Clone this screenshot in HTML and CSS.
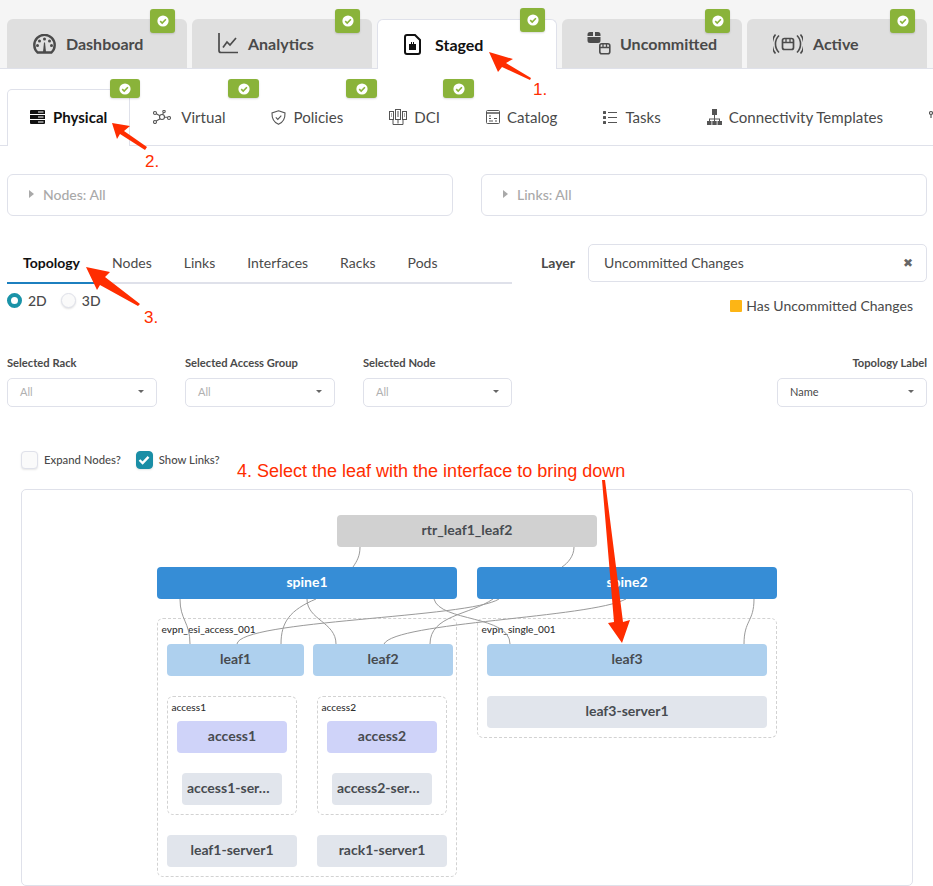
FILE: index.html
```html
<!DOCTYPE html>
<html lang="en">
<head>
<meta charset="utf-8">
<title>Staged - Physical Topology</title>
<link rel="stylesheet" href="styles.css">
</head>
<body>
<div class="page">
  <svg width="0" height="0" class="defs">
    <symbol id="ok" viewBox="0 0 12 12">
      <circle cx="6" cy="6" r="5.6" fill="#fff"/>
      <path d="M3.2 6.2 5.2 8.1 8.9 4.2" fill="none" stroke="#8ab33a" stroke-width="1.6"/>
    </symbol>
  </svg>

  <nav class="main-tabs">
    <div class="main-tab">
      <svg class="ic" width="23" height="20" viewBox="0 0 23 20"><path d="M4.5 18.500A10.200 10.200 0 1 1 18.500 18.500Z" fill="none" stroke="#4b4b4b" stroke-width="2.400"/><path d="M10 18 11 8.500h1L13 18Z" fill="#4b4b4b"/><circle cx="11.500" cy="5" r="1.500" fill="#4b4b4b"/><circle cx="6.500" cy="7" r="1.500" fill="#4b4b4b"/><circle cx="16.500" cy="7" r="1.500" fill="#4b4b4b"/><circle cx="4.500" cy="11.500" r="1.500" fill="#4b4b4b"/><circle cx="18.500" cy="11.500" r="1.500" fill="#4b4b4b"/></svg>
      <span>Dashboard</span>
      <span class="badge"><svg width="12" height="12"><use href="#ok"/></svg></span>
    </div>
    <div class="main-tab">
      <svg class="ic" width="20" height="21" viewBox="0 0 20 21"><path d="M1 0v17.500a2 2 0 0 0 2 2h17" fill="none" stroke="#4b4b4b" stroke-width="1.700"/><path d="M5 14.500 9 9l3 3 6-7" fill="none" stroke="#4b4b4b" stroke-width="1.700"/></svg>
      <span>Analytics</span>
      <span class="badge"><svg width="12" height="12"><use href="#ok"/></svg></span>
    </div>
    <div class="main-tab main-tab-active">
      <svg class="ic" width="17" height="21" viewBox="0 0 17 21"><path d="M3 1h8l5 5v12a2 2 0 0 1-2 2H3a2 2 0 0 1-2-2V3a2 2 0 0 1 2-2Z" fill="none" stroke="#111" stroke-width="2"/><path d="M5 10h7v6H5Z" fill="#111"/><path d="M7 8h1v2H7Zm2 0h1v2H9Z" fill="#111"/></svg>
      <span>Staged</span>
      <span class="badge badge-high"><svg width="12" height="12"><use href="#ok"/></svg></span>
    </div>
    <div class="main-tab main-tab-tight">
      <svg class="ic" width="24" height="23" viewBox="0 0 24 23"><path d="M3 0h3v4H.5V2.500A2.500 2.500 0 0 1 3 0Zm5 0h3a2.500 2.500 0 0 1 2.500 2.500V4H8Zm-7.500 5h13v3.500A2.500 2.500 0 0 1 11 11H3A2.500 2.500 0 0 1 .5 8.500Z" fill="#4b4b4b"/><rect x="12.800" y="11.800" width="10" height="10" rx="2" fill="none" stroke="#4b4b4b" stroke-width="1.600"/><path d="M12.800 15.500h10M16 11.800v3.700M19.500 11.800v3.700" stroke="#4b4b4b" stroke-width="1.300" fill="none"/></svg>
      <span>Uncommitted</span>
      <span class="badge"><svg width="12" height="12"><use href="#ok"/></svg></span>
    </div>
    <div class="main-tab">
      <svg class="ic" width="30" height="20" viewBox="0 0 30 20"><rect x="9.500" y="4.500" width="11" height="11" rx="2" fill="none" stroke="#4b4b4b" stroke-width="1.700"/><path d="M9.500 8.500h11M13 4.500v4M17 4.500v4" stroke="#4b4b4b" stroke-width="1.300"/><path d="M6 1.500a12 12 0 0 0 0 17M2.500 .5a15 15 0 0 0 0 19M24 1.500a12 12 0 0 1 0 17M27.500 .5a15 15 0 0 1 0 19" fill="none" stroke="#4b4b4b" stroke-width="1.600"/></svg>
      <span>Active</span>
      <span class="badge"><svg width="12" height="12"><use href="#ok"/></svg></span>
    </div>
  </nav>

  <nav class="sub-tabs">
    <div class="sub-tab sub-tab-active">
      <svg width="15" height="14" viewBox="0 0 15 14"><path d="M1 0h13a1 1 0 0 1 1 1v3H0V1a1 1 0 0 1 1-1Zm-1 5h15v4H0Zm0 5h15v3a1 1 0 0 1-1 1H1a1 1 0 0 1-1-1Z" fill="#111"/><path d="M8 1.500h5.500v1H8Zm0 5h5.500v1H8Zm0 5h5.500v1H8Z" fill="#fff"/></svg>
      <span>Physical</span>
      <span class="badge badge-sub badge-first"><svg width="12" height="12"><use href="#ok"/></svg></span>
    </div>
    <div class="sub-tab sub-tab-wide">
      <svg width="18" height="14" viewBox="0 0 18 14" fill="none" stroke="#555" stroke-width="1.100"><circle cx="9" cy="7" r="2.500"/><circle cx="2" cy="3" r="1.500"/><circle cx="2" cy="12" r="1.500"/><circle cx="11" cy="1.500" r="1.200"/><circle cx="16" cy="8" r="1.500"/><path d="M3.300 3.800 6.900 5.800M3.200 11 7.200 8.800M10.400 2.600 9.600 4.600M11.500 7.300H14.500"/></svg>
      <span>Virtual</span>
      <span class="badge badge-sub"><svg width="12" height="12"><use href="#ok"/></svg></span>
    </div>
    <div class="sub-tab">
      <svg width="15" height="15" viewBox="0 0 15 15" fill="none" stroke="#555" stroke-width="1.100"><path d="M7.500.8 14 3c.2 5.500-1.800 9.300-6.500 11.300C2.800 12.300.8 8.500 1 3Z"/><path d="M4.800 7.400 6.800 9.400 10.300 5.600"/></svg>
      <span>Policies</span>
      <span class="badge badge-sub"><svg width="12" height="12"><use href="#ok"/></svg></span>
    </div>
    <div class="sub-tab">
      <svg width="18" height="16" viewBox="0 0 18 16" fill="none" stroke="#555" stroke-width="1"><rect x=".5" y="2.500" width="4" height="8"/><rect x="6.500" y=".5" width="5" height="10"/><rect x="13.500" y="2.500" width="4" height="8"/><path d="M8 3h2M8 5h2M8 7h2M2 5h1M2 7h1M15 5h1M15 7h1M9 10.500v4M4 15.500h10M4 10.500v5M14 10.500v5"/></svg>
      <span>DCI</span>
      <span class="badge badge-sub"><svg width="12" height="12"><use href="#ok"/></svg></span>
    </div>
    <div class="sub-tab">
      <svg width="14" height="14" viewBox="0 0 14 14" fill="none" stroke="#555" stroke-width="1"><rect x=".5" y=".5" width="13" height="13" rx="1"/><path d="M.5 3h13" stroke-width="1.500"/><path d="M3 6h2M3 8.500h2M3 11h4M8 8.500h3M9 11h2"/></svg>
      <span>Catalog</span>
    </div>
    <div class="sub-tab sub-tab-mid">
      <svg width="14" height="15" viewBox="0 0 14 15" fill="#555"><rect x="0" y="1" width="3" height="3" rx=".5"/><rect x="0" y="6" width="3" height="3" rx=".5"/><rect x="0" y="11" width="3" height="3" rx=".5"/><path d="M5 2h9v1H5Zm0 5h9v1H5Zm0 5h9v1H5Z"/></svg>
      <span>Tasks</span>
    </div>
    <div class="sub-tab">
      <svg width="15" height="16" viewBox="0 0 15 16" fill="#555"><path d="M5 0h5v6H5Z"/><path d="M7 6h1v3.500h5V12h-1v-1.500H8V12H7v-1.500H3V12H2V9.500h5Z"/><path d="M0 12h4.500v4H0Zm5.300 0h4.400v4H5.300Zm5.200 0H15v4h-4.500Z"/></svg>
      <span>Connectivity Templates</span>
    </div>
    <div class="sub-tab">
      <svg width="15" height="15" viewBox="0 0 15 15" fill="none" stroke="#555" stroke-width="1.200"><circle cx="2" cy="3" r="1.500"/><path d="M2 5v3"/></svg>
    </div>
  </nav>

  <section class="filters">
    <div class="filter"><i class="caret"></i><span>Nodes: All</span></div>
    <div class="filter"><i class="caret"></i><span>Links: All</span></div>
  </section>

  <section class="split">
    <div class="split-left">
      <div class="view-tabs">
        <span class="view-tab view-tab-active">Topology</span>
        <span class="view-tab">Nodes</span>
        <span class="view-tab">Links</span>
        <span class="view-tab">Interfaces</span>
        <span class="view-tab">Racks</span>
        <span class="view-tab">Pods</span>
      </div>
      <div class="radios">
        <span class="radio radio-on"></span><span class="radio-label">2D</span>
        <span class="radio radio-off"></span><span class="radio-label">3D</span>
      </div>
    </div>
    <div class="split-right">
      <div class="layer-row">
        <span class="layer-label">Layer</span>
        <div class="layer-input"><span>Uncommitted Changes</span><span class="clear">&#10006;</span></div>
      </div>
      <div class="legend"><i class="swatch"></i><span>Has Uncommitted Changes</span></div>
    </div>
  </section>

  <section class="selectors">
    <div class="sel-group">
      <div class="field"><label class="field-label">Selected Rack</label><div class="select muted"><span>All</span><i class="down"></i></div></div>
      <div class="field"><label class="field-label">Selected Access Group</label><div class="select muted"><span>All</span><i class="down"></i></div></div>
      <div class="field field-narrow"><label class="field-label">Selected Node</label><div class="select muted"><span>All</span><i class="down"></i></div></div>
    </div>
    <div class="field field-right"><label class="field-label">Topology Label</label><div class="select"><span>Name</span><i class="down"></i></div></div>
  </section>

  <section class="checks">
    <span class="check"></span><span class="check-label">Expand Nodes?</span>
    <span class="check check-on"><svg width="12" height="10" viewBox="0 0 12 10"><path d="M1.500 5 4.600 8 10.500 1.800" fill="none" stroke="#fff" stroke-width="2.400"/></svg></span><span class="check-label">Show Links?</span>
  </section>

  <section class="canvas">
    <div class="group g-esi"><span>evpn_esi_access_001</span></div>
    <div class="group g-single"><span>evpn_single_001</span></div>
    <div class="group g-ac1"><span>access1</span></div>
    <div class="group g-ac2"><span>access2</span></div>
    <svg class="links" width="890" height="395" viewBox="22 490 890 395" fill="none" stroke="#9a9a9a" stroke-width="1">
      <path d="M360 547C360 556 357 561 353 567"/>
      <path d="M574 547C574 556 568 563 562 567"/>
      <path d="M180 599C180 620 190 622 190 644"/>
      <path d="M316 599C290 610 281 622 281 644"/>
      <path d="M307 599C307 620 336 622 336 644"/>
      <path d="M434 599C440 622 510 615 510 644"/>
      <path d="M499 599C470 618 240 620 237 644"/>
      <path d="M626 599C590 618 395 622 384 644"/>
      <path d="M493 599C470 615 430 615 430 644"/>
      <path d="M754 599C754 622 744 620 744 644"/>
    </svg>
    <div class="node rtr n-rtr">rtr_leaf1_leaf2</div>
    <div class="node spine n-sp1">spine1</div>
    <div class="node spine n-sp2">spine2</div>
    <div class="node leaf n-lf1">leaf1</div>
    <div class="node leaf n-lf2">leaf2</div>
    <div class="node leaf n-lf3">leaf3</div>
    <div class="node server n-lf3s">leaf3-server1</div>
    <div class="node access n-ac1">access1</div>
    <div class="node access n-ac2">access2</div>
    <div class="node server node-start n-ac1s">access1-ser…</div>
    <div class="node server node-start n-ac2s">access2-ser…</div>
    <div class="node server n-lf1s">leaf1-server1</div>
    <div class="node server n-rks">rack1-server1</div>
  </section>

  <svg class="arrows" width="933" height="886" viewBox="0 0 933 886" fill="#ff2d00">
    <path d="M489 52 513 59 506 63 531 78 530 80 502 67 498 72Z"/>
    <path d="M112 123 130 126 124 131 147 147 145 150 120 134 117 139Z"/>
    <path d="M86 267 110 272 105 277 140 304 138 306 100 285 97 290Z"/>
    <path d="M602 480 605 480 623 622 630 620 622 643 608 623 614 622Z"/>
  </svg>
  <span class="note note-1">1.</span>
  <span class="note note-2">2.</span>
  <span class="note note-3">3.</span>
  <span class="note note-4">4. Select the leaf with the interface to bring down</span>
</div>
</body>
</html>
```

FILE: styles.css
```css
* { box-sizing: border-box; }
html, body { margin: 0; padding: 0; background: #fff; }
.page {
  position: relative;
  width: 933px;
  height: 886px;
  overflow: hidden;
  font-family: Lato, "Noto Sans", sans-serif;
  color: #4a4a4a;
  background: #fff;
}
.defs { position: absolute; }

/* main tabs */
.main-tabs {
  display: flex;
  gap: 5px;
  height: 69px;
  padding: 19px 0 0 7px;
  background: #f5f5f5;
  border-bottom: 1px solid #dfe1ea;
}
.main-tab {
  position: relative;
  display: flex;
  align-items: center;
  gap: 10px;
  width: 180px;
  height: 49px;
  padding: 0 0 0 26px;
  background: #dfdfdf;
  border-radius: 6px 6px 0 0;
  font-size: 16px;
  font-weight: 700;
  color: #4a4a4a;
}
.main-tab-active {
  height: 50px;
  gap: 14px;
  padding-bottom: 1px;
  background: #fff;
  color: #111;
  border: 1px solid #dfe1ea;
  border-bottom: 0;
}
.main-tab-tight { gap: 9px; padding-left: 25px; }
.badge {
  position: absolute;
  top: -10px;
  right: 12px;
  width: 25px;
  height: 24px;
  display: flex;
  align-items: center;
  justify-content: center;
  background: #8ab33a;
  border-radius: 3px;
  box-shadow: 0 1px 2px rgba(0, 0, 0, .15);
}
.badge-high { top: -12px; right: 11px; }

/* sub tabs */
.sub-tabs {
  display: flex;
  height: 77px;
  padding: 20px 0 0 7px;
  border-bottom: 1px solid #dfe1ea;
  white-space: nowrap;
}
.sub-tab {
  position: relative;
  flex: none;
  display: flex;
  align-items: center;
  gap: 7px;
  height: 56px;
  padding: 0 23px;
  font-size: 15.100px;
  color: #4a4a4a;
}
.sub-tab-wide { gap: 10px; }
.sub-tab-mid { gap: 8px; }
.sub-tab-active {
  height: 57px;
  gap: 8px;
  margin-bottom: -1px;
  padding: 0 22px 2px;
  background: #fff;
  color: #111;
  font-size: 15px;
  font-weight: 700;
  border: 1px solid #dfe1ea;
  border-bottom: 0;
  border-radius: 5px 0 0 0;
}
.badge-sub {
  top: -10px;
  right: -11px;
  width: 31px;
  height: 19px;
  border-radius: 3px;
}
.badge-first { top: -11px; width: 30px; }

/* filter boxes */
.filters {
  display: flex;
  gap: 28px;
  margin-top: 28px;
  padding: 0 6px 0 7px;
}
.filter {
  flex: 1;
  display: flex;
  align-items: center;
  gap: 9px;
  height: 42px;
  padding: 0 0 2px 21px;
  border: 1px solid #dfe1ea;
  border-radius: 6px;
  font-size: 14px;
  font-weight: 500;
  color: #a9a9a9;
}
.caret {
  width: 0;
  height: 0;
  border-left: 5px solid #a9a9a9;
  border-top: 4px solid transparent;
  border-bottom: 4px solid transparent;
}

/* view tabs / layer */
.split {
  display: flex;
  margin-top: 28px;
  padding: 0 6px 0 7px;
}
.split-left { width: 505px; }
.view-tabs {
  display: flex;
  height: 40px;
  border-bottom: 2px solid #dfe1ea;
}
.view-tab {
  height: 40px;
  padding: 10px 16px 0;
  font-size: 14px;
  line-height: 17px;
  color: #4a4a4a;
}
.view-tab-active {
  color: #111;
  font-weight: 700;
  border-bottom: 2px solid #1c7fbf;
}
.radios {
  display: flex;
  align-items: center;
  height: 18px;
  margin-top: 7px;
  font-size: 14px;
  font-weight: 500;
}
.radio {
  width: 15px;
  height: 15px;
  border-radius: 50%;
  margin-right: 6px;
}
.radio-on { border: 4px solid #1a93a8; background: #fff; }
.radio-off {
  background: #fafafa;
  border: 1px solid #dfe1ea;
  box-shadow: 0 1px 2px rgba(0, 0, 0, .12);
}
.radio-label { margin-right: 14px; }
.split-right { flex: 1; padding-left: 29px; }
.layer-row { display: flex; align-items: center; gap: 13px; }
.layer-label { font-size: 14px; font-weight: 700; padding-bottom: 2px; }
.layer-input {
  flex: 1;
  display: flex;
  align-items: center;
  justify-content: space-between;
  height: 38px;
  padding: 0 13px 2px 15px;
  border: 1px solid #dfe1ea;
  border-radius: 5px;
  font-size: 14px;
}
.clear { font-size: 12px; color: #666; }
.legend {
  display: flex;
  align-items: center;
  justify-content: flex-end;
  gap: 4px;
  margin-top: 15px;
  padding-right: 14px;
  font-size: 14px;
  line-height: 18px;
}
.swatch {
  width: 12px;
  height: 12px;
  background: #fdb515;
  border-radius: 1px;
}

/* selectors */
.selectors {
  display: flex;
  justify-content: space-between;
  margin-top: 41px;
  padding: 0 6px 0 7px;
}
.sel-group { display: flex; gap: 28px; }
.field { width: 150px; }
.field-narrow { width: 149px; }
.field-label {
  display: block;
  height: 22px;
  font-size: 11.200px;
  line-height: 14px;
  font-weight: 700;
  color: #4a4a4a;
}
.field-right .field-label { text-align: right; }
.select {
  display: flex;
  align-items: center;
  justify-content: space-between;
  height: 29px;
  padding: 0 12px 2px 12px;
  border: 1px solid #dfe1ea;
  border-radius: 5px;
  font-size: 11px;
  color: #4a4a4a;
}
.muted { color: #b0b0b0; }
.down {
  width: 0;
  height: 0;
  border-top: 3.500px solid #666;
  border-left: 3.500px solid transparent;
  border-right: 3.500px solid transparent;
}

/* checks */
.checks {
  display: flex;
  align-items: center;
  height: 18px;
  margin-top: 44px;
  padding-left: 21px;
  font-size: 11.300px;
  font-weight: 500;
}
.check {
  display: flex;
  align-items: center;
  justify-content: center;
  width: 17px;
  height: 18px;
  margin-right: 6px;
  background: #fafafa;
  border: 1px solid #dfe1ea;
  border-radius: 4px;
  box-shadow: 0 1px 2px rgba(0, 0, 0, .1);
}
.check-on { background: #1a8ea6; border-color: #1a8ea6; }
.check-label { margin-right: 15px; padding-bottom: 2px; }

/* diagram */
.canvas {
  position: relative;
  width: 892px;
  height: 397px;
  margin: 20px 0 0 21px;
  border: 1px solid #dfe1ea;
  border-radius: 5px;
}
.links { position: absolute; left: 0; top: 0; }
.group {
  position: absolute;
  padding: 3.500px 0 0 3.500px;
  border: 1.500px dashed #d2d2d2;
  border-radius: 6px;
  font-size: 10.100px;
  font-weight: 500;
  line-height: 12px;
  color: #2f2f2f;
}
.g-esi { left: 135px; top: 128px; width: 300px; height: 259px; }
.g-single { left: 455px; top: 128px; width: 300px; height: 120px; }
.g-ac1 { left: 145px; top: 206px; width: 130px; height: 119px; }
.g-ac2 { left: 295px; top: 206px; width: 130px; height: 119px; }
.node {
  position: absolute;
  display: flex;
  align-items: center;
  justify-content: center;
  height: 32px;
  padding-bottom: 3px;
  border-radius: 4px;
  font-size: 14px;
  font-weight: 700;
  color: #474b50;
  white-space: nowrap;
}
.node-start { justify-content: flex-start; padding-left: 5px; }
.rtr { background: #d1d1d1; }
.spine { background: #368dd6; color: #fff; }
.leaf { background: #aed0ee; }
.access { background: #cfd3f9; }
.server { background: #e1e5ec; }
.n-rtr { left: 315px; top: 25px; width: 260px; }
.n-sp1 { left: 135px; top: 77px; width: 300px; }
.n-sp2 { left: 455px; top: 77px; width: 300px; }
.n-lf1 { left: 145px; top: 154px; width: 137px; }
.n-lf2 { left: 291px; top: 154px; width: 140px; }
.n-lf3 { left: 465px; top: 154px; width: 280px; }
.n-lf3s { left: 465px; top: 206px; width: 280px; }
.n-ac1 { left: 155px; top: 231px; width: 110px; }
.n-ac2 { left: 305px; top: 231px; width: 110px; }
.n-ac1s { left: 160px; top: 283px; width: 100px; }
.n-ac2s { left: 310px; top: 283px; width: 100px; }
.n-lf1s { left: 145px; top: 345px; width: 130px; }
.n-rks { left: 295px; top: 345px; width: 130px; }

/* annotations on top of the screenshot */
.arrows { position: absolute; left: 0; top: 0; pointer-events: none; }
.note {
  position: absolute;
  font-family: "Liberation Sans", Arial, sans-serif;
  font-size: 17px;
  line-height: 18px;
  color: #ff2d00;
  white-space: nowrap;
}
.note-1 { left: 533px; top: 81px; }
.note-2 { left: 145px; top: 153px; }
.note-3 { left: 144px; top: 309px; }
.note-4 { left: 237px; top: 461px; font-size: 18px; line-height: 20px; }
```
